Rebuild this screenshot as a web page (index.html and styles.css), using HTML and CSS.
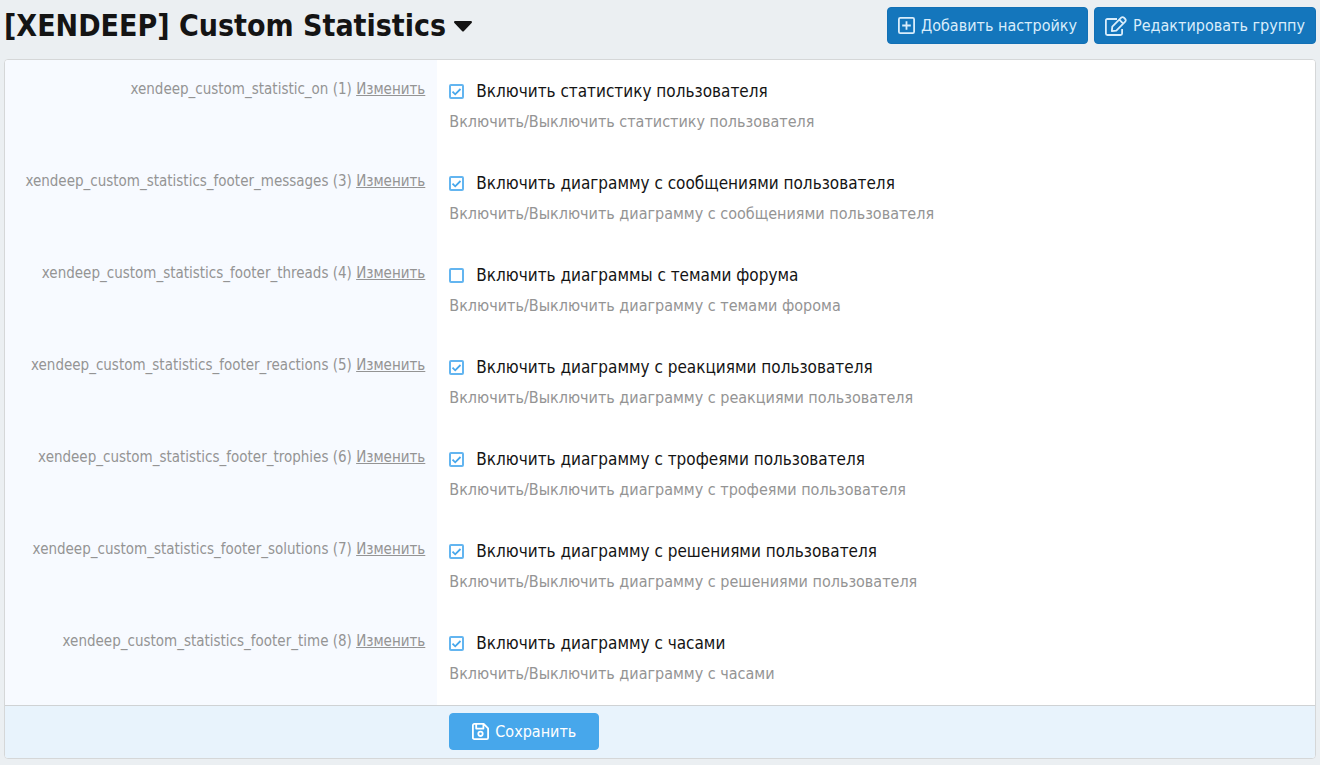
FILE: index.html
```html
<!DOCTYPE html>
<html lang="ru">
  <head>
    <meta charset="UTF-8" />
    <meta name="viewport" content="width=device-width, initial-scale=1.0" />
    <title>[XENDEEP] Custom Statistics</title>
    <link rel="stylesheet" href="styles.css">
  </head>
  <body>
    <header class="page-header">
      <h1 class="page-title">
        <button type="button" class="title-menu">
          [XENDEEP] Custom Statistics
          <svg class="caret" viewBox="0 0 18 11" aria-hidden="true"><path d="M1.2 0h15.6c1 0 1.5 1.2.8 1.9L10 10a1.4 1.4 0 0 1-2 0L.4 1.9C-.3 1.2.2 0 1.2 0z"/></svg>
        </button>
      </h1>
      <div class="actions">
        <button type="button" class="button">
          <svg class="icon" viewBox="0 0 17 17" aria-hidden="true"><rect x=".9" y=".9" width="15.2" height="15.2" rx="1.4"/><path d="M8.5 4.2v8.6M4.2 8.5h8.6"/></svg>
          Добавить настройку
        </button>
        <button type="button" class="button">
          <svg class="icon icon--edit" viewBox="0 0 22 20" aria-hidden="true"><path d="M12 3H2.4C1.5 3 .9 3.600.9 4.500v13c0 .9.6 1.500 1.500 1.500h13.200c.9 0 1.500-.6 1.500-1.500v-4.500"/><path d="M7.300 10.700 16.200 1.700a1.900 1.900 0 0 1 2.700 0l1.300 1.300a1.900 1.900 0 0 1 0 2.700l-8.900 8.900-4.500.5zM14.300 3.700l3.900 3.900"/></svg>
          Редактировать группу
        </button>
      </div>
    </header>

    <form class="block">
      <div class="rows">
        <div class="row">
          <div class="row-label">xendeep_custom_statistic_on (1) <a href="#">Изменить</a></div>
          <div class="row-body">
            <label class="choice"><input type="checkbox" checked /> Включить статистику пользователя</label>
            <p class="hint">Включить/Выключить статистику пользователя</p>
          </div>
        </div>
        <div class="row">
          <div class="row-label">xendeep_custom_statistics_footer_messages (3) <a href="#">Изменить</a></div>
          <div class="row-body">
            <label class="choice"><input type="checkbox" checked /> Включить диаграмму с сообщениями пользователя</label>
            <p class="hint">Включить/Выключить диаграмму с сообщениями пользователя</p>
          </div>
        </div>
        <div class="row">
          <div class="row-label">xendeep_custom_statistics_footer_threads (4) <a href="#">Изменить</a></div>
          <div class="row-body">
            <label class="choice"><input type="checkbox" /> Включить диаграммы с темами форума</label>
            <p class="hint">Включить/Выключить диаграмму с темами форома</p>
          </div>
        </div>
        <div class="row">
          <div class="row-label">xendeep_custom_statistics_footer_reactions (5) <a href="#">Изменить</a></div>
          <div class="row-body">
            <label class="choice"><input type="checkbox" checked /> Включить диаграмму с реакциями пользователя</label>
            <p class="hint">Включить/Выключить диаграмму с реакциями пользователя</p>
          </div>
        </div>
        <div class="row">
          <div class="row-label">xendeep_custom_statistics_footer_trophies (6) <a href="#">Изменить</a></div>
          <div class="row-body">
            <label class="choice"><input type="checkbox" checked /> Включить диаграмму с трофеями пользователя</label>
            <p class="hint">Включить/Выключить диаграмму с трофеями пользователя</p>
          </div>
        </div>
        <div class="row">
          <div class="row-label">xendeep_custom_statistics_footer_solutions (7) <a href="#">Изменить</a></div>
          <div class="row-body">
            <label class="choice"><input type="checkbox" checked /> Включить диаграмму с решениями пользователя</label>
            <p class="hint">Включить/Выключить диаграмму с решениями пользователя</p>
          </div>
        </div>
        <div class="row">
          <div class="row-label">xendeep_custom_statistics_footer_time (8) <a href="#">Изменить</a></div>
          <div class="row-body">
            <label class="choice"><input type="checkbox" checked /> Включить диаграмму с часами</label>
            <p class="hint">Включить/Выключить диаграмму с часами</p>
          </div>
        </div>
      </div>
      <footer class="submit-row">
        <button type="submit" class="button button--save">
          <svg class="icon" viewBox="0 0 17 17" aria-hidden="true"><path d="M2.300.9h9.400l4.400 4.400v9.400c0 .8-.6 1.400-1.400 1.400H2.300c-.8 0-1.400-.6-1.400-1.400V2.300C.9 1.500 1.500.9 2.300.9zM4.200 1v4.600h7.200V1"/><circle cx="8.5" cy="10.8" r="2.2"/></svg>
          Сохранить
        </button>
      </footer>
    </form>
  </body>
</html>
```
FILE: styles.css
```css
* {
  box-sizing: border-box;
}

body {
  margin: 0;
  padding: 7px 4px;
  background-color: #ebeff2;
  color: #141414;
  font-family: "DejaVu Sans Condensed", "Noto Sans", sans-serif;
  font-size: 17px;
}

button {
  font-family: inherit;
  cursor: pointer;
}

/* header */
.page-header {
  display: flex;
  justify-content: space-between;
  align-items: flex-start;
  margin-bottom: 14px;
}

.page-title {
  margin: 0;
}

.title-menu {
  display: flex;
  align-items: center;
  gap: 8px;
  padding: 0;
  border: none;
  background: none;
  color: inherit;
  font-size: 30px;
  font-weight: bold;
  line-height: 38px;
}

.caret {
  width: 18px;
  height: 11px;
  fill: currentColor;
}

.actions {
  display: flex;
  gap: 6px;
}

.button {
  display: flex;
  align-items: center;
  justify-content: center;
  gap: 6px;
  height: 37px;
  padding: 0 10px;
  border: 1px solid #1270b5;
  border-radius: 4px;
  background-color: #1476bc;
  color: #d9edfb;
  font-size: 16px;
}

.icon {
  width: 17px;
  height: 17px;
  fill: none;
  stroke: currentColor;
  stroke-width: 1.8;
  stroke-linejoin: round;
}

.icon--edit {
  width: 22px;
  height: 20px;
}

/* options */
.block {
  border: 1px solid #d5d7d8;
  border-radius: 4px;
  background-color: #fff;
  overflow: hidden;
}

.rows {
  padding-bottom: 1px;
  background: linear-gradient(to right, #f7faff 33%, #fff 33%);
}

.row {
  display: flex;
}

.row-label {
  width: 33%;
  padding: 18px 12px 0;
  color: #949494;
  font-size: 15px;
  line-height: 22px;
  text-align: right;
}

.row-label a {
  color: inherit;
}

.row-body {
  flex: 1;
  padding: 18px 12px;
}

.choice {
  display: flex;
  align-items: center;
  gap: 12px;
  line-height: 26px;
}

.choice input {
  appearance: none;
  width: 15px;
  height: 15px;
  margin: 0;
  border: 2px solid #63b5f0;
  border-radius: 2px;
  background-color: #fff;
}

.choice input:checked {
  background-image: url("data:image/svg+xml,%3Csvg xmlns='http://www.w3.org/2000/svg' viewBox='0 0 11 11'%3E%3Cpath d='M1.5 5.6l2.700 2.700L9.500 3' fill='none' stroke='%2347a7eb' stroke-width='1.8'/%3E%3C/svg%3E");
}

.hint {
  margin: 6px 0 0;
  color: #949494;
  font-size: 16px;
  line-height: 24px;
}

/* save bar */
.submit-row {
  padding: 7px 12px 8px 33%;
  border-top: 1px solid #cfd2d4;
  background-color: #e8f3fc;
}

.button--save {
  min-width: 150px;
  margin-left: 12px;
  border-color: #47a7eb;
  background-color: #47a7eb;
  color: #fff;
}
```
